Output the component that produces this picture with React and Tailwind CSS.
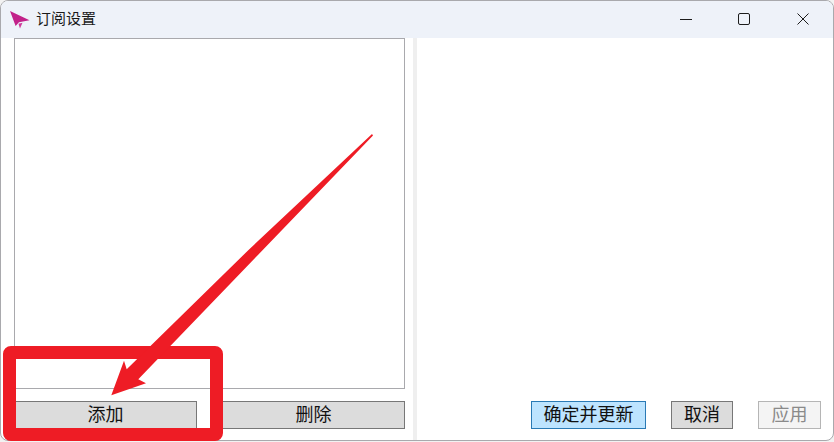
const FONT = "font-['Liberation_Sans','Noto_Sans_CJK_SC',sans-serif]";

function PlaneIcon() {
  return (
    <svg width="20" height="18" viewBox="0 0 20 18" className="shrink-0">
      <path d="M0 0 L19.5 9.3 L9 11.3 L5.6 15 Z" fill="#c2228a" />
      <path d="M8.5 12.8 L12.5 11.8 L10 17.5 Z" fill="#cf3a9c" />
    </svg>
  );
}

function WinButtons() {
  return (
    <div className="flex items-center h-full">
      <div className="w-[56px] flex justify-center">
        <div className="w-3 h-px bg-[#1c1c1c] -mt-px" />
      </div>
      <div className="w-[60px] flex justify-center">
        <div className="w-3 h-3 border border-[#1c1c1c] rounded-[2px] -mt-px" />
      </div>
      <div className="w-[58px] flex justify-center">
        <svg width="12" height="12" viewBox="0 0 12 12" className="-mt-px">
          <path d="M0.5 0.5 L11.5 11.5 M11.5 0.5 L0.5 11.5" stroke="#1c1c1c" strokeWidth="1" />
        </svg>
      </div>
    </div>
  );
}

export default function App() {
  return (
    <div className={`${FONT} relative w-[834px] h-[442px] overflow-hidden bg-[#f2f2f2]`}>
      <div className="w-[834px] h-[441px] bg-white border border-[#a9a9ad] rounded-[8px] overflow-hidden flex flex-col">
        {/* title bar */}
        <div className="h-[37px] shrink-0 bg-[#eef2f9] flex items-center justify-between pr-[1px]">
          <div className="flex items-center gap-[6px] pl-[9px]">
            <PlaneIcon />
            <span className="text-[15px] text-[#1a1a1a]">订阅设置</span>
          </div>
          <WinButtons />
        </div>

        <div className="flex-1 flex min-h-0">
          {/* left pane */}
          <div className="w-[412px] shrink-0 flex flex-col pl-[13px] pr-[8px] pb-[11px]">
            <div className="flex-1 border border-[#a9a9ad] bg-white" />
            <div className="flex justify-between mt-[12px]">
              <button className="w-[183px] h-[28px] bg-[#dcdcdc] border border-[#777] text-[18px] leading-none text-[#111]">添加</button>
              <button className="w-[183px] h-[28px] bg-[#dcdcdc] border border-[#777] text-[18px] leading-none text-[#111]">删除</button>
            </div>
          </div>

          {/* splitter */}
          <div className="w-[4px] shrink-0 bg-[#efefef]" />

          {/* right pane */}
          <div className="flex-1 flex flex-col justify-end pb-[11px] pr-[12px]">
            <div className="flex justify-end items-center">
              <button className="w-[115px] h-[28px] bg-[#bde4ff] border border-[#2a7ab5] text-[18px] leading-none text-[#111]">确定并更新</button>
              <button className="w-[62px] h-[28px] ml-[25px] bg-[#dcdcdc] border border-[#777] text-[18px] leading-none text-[#111]">取消</button>
              <button className="w-[63px] h-[28px] ml-[25px] bg-[#f4f4f4] border border-[#b5b5b5] text-[18px] leading-none text-[#8a8a8a]">应用</button>
            </div>
          </div>
        </div>
      </div>

      {/* red annotation over the screenshot */}
      <div className="absolute left-[3px] top-[346px] w-[220px] h-[95px] border-[13px] border-[#ee1c25] rounded-[8px]" />
      <svg className="absolute left-0 top-0 pointer-events-none" width="834" height="442" viewBox="0 0 834 442">
        <path d="M372 134 L373 135.5 L138.3 379.3 L146 383.3 L111.3 395.3 L124 360.7 L126.7 369.3 L248.5 250 Z" fill="#ee1c25" />
      </svg>
    </div>
  );
}
